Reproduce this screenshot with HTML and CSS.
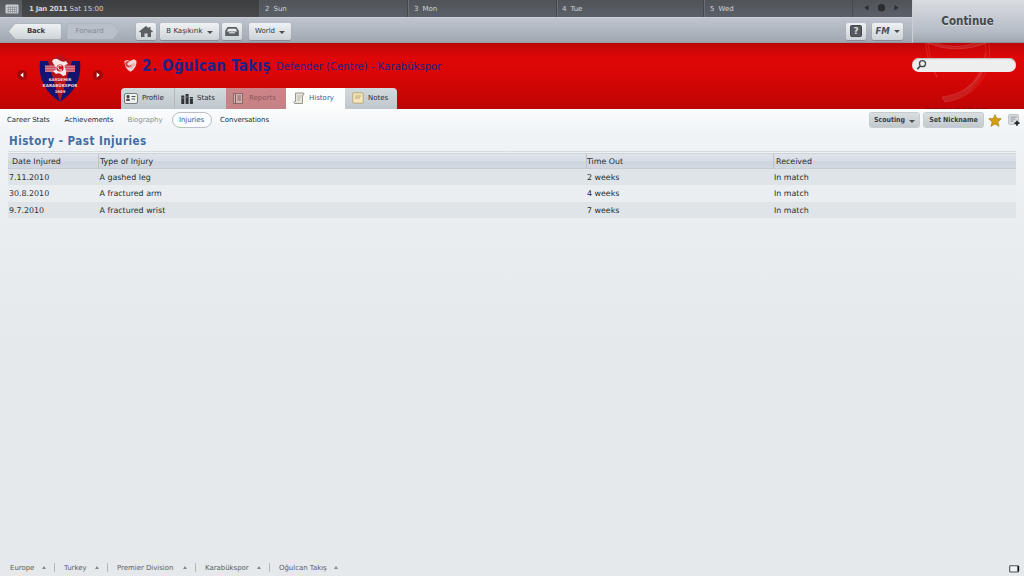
FILE: index.html
```html
<!DOCTYPE html>
<html lang="en">
<head>
<meta charset="utf-8">
<title>Oğulcan Takış - Past Injuries</title>
<link rel="stylesheet" href="styles.css">
</head>
<body>
<div class="top">
  <div class="bars">
    <div class="calendar">
      <div class="cal-icon"><svg width="14" height="10" viewBox="0 0 14 10"><rect x=".5" y=".5" width="13" height="9" rx="1" fill="#c9cccf"/><path d="M2 3.500h10M2 5.500h10M2 7.500h10M3.500 2v7M5.500 2v7M7.500 2v7M9.500 2v7M11.500 2v7" stroke="#85898d" stroke-width=".6"/></svg></div>
      <div class="day today"><b>1 Jan 2011</b><span>Sat 15:00</span></div>
      <div class="day sun"><span>2</span><span>Sun</span></div>
      <div class="day mon"><span>3</span><span>Mon</span></div>
      <div class="day tue"><span>4</span><span>Tue</span></div>
      <div class="day wed"><span>5</span><span>Wed</span></div>
      <div class="pager"><svg width="60" height="17" viewBox="1.500 0 60 17"><path d="M17 5v5.600l-4-2.800zM43 5v5.600l4-2.800z" fill="#2b2d30"/><circle cx="30" cy="7.700" r="3.700" fill="#2b2d30"/></svg></div>
    </div>
    <div class="toolbar">
      <svg class="arrows" width="113" height="18" viewBox="0 0 113 18">
        <defs><linearGradient id="btn" x2="0" y2="1"><stop stop-color="#eff2f4"/><stop offset="1" stop-color="#ccd3d8"/></linearGradient></defs>
        <path d="M.3 8.500L6 1.500Q7 .4 9 .4H51Q53.500 .4 53.500 2.500V14Q53.500 16.500 51 16.500H9Q7 16.500 6 15z" fill="url(#btn)" stroke="#959ca4" stroke-width=".6"/>
        <path d="M61 .7H103Q105 .7 106 2L111 8.500L106 15Q105 16.300 103 16.300H61Q59 16.300 59 14.500V2.500Q59 .7 61 .7z" fill="#b9c0c9" stroke="#a4abb5" stroke-width=".5"/>
        <text class="back" x="19" y="10.400">Back</text><text class="forward" x="67.500" y="10.400">Forward</text>
      </svg>
      <div class="button home"><svg width="14" height="11" viewBox="0 0 14 11"><path d="M7 0L0 5.500L1 6.500L2 6V11H5.500V7.500H8.500V11H12V6L13 6.500L14 5.500L11.500 3.500V1H9.800V2.200z" fill="#5c6065"/></svg></div>
      <div class="button manager">B Kaşıkırık<i class="caret"></i></div>
      <div class="button inbox"><svg width="14" height="9" viewBox="0 0 14 9"><path d="M3 .9H11L13 4V8.100H1V4z" fill="#eceef0" stroke="#5c6065" stroke-width="1.600"/><path d="M1 4.500H13V8.500H1z" fill="#5c6065"/><path d="M4 5.800H10" stroke="#dfe3e6" stroke-width="1.200"/></svg></div>
      <div class="button world">World<i class="caret"></i></div>
      <div class="button help"><svg width="12" height="12" viewBox="0 0 12 12"><rect x=".5" y=".5" width="11" height="11" rx="1" fill="#555a60" stroke="#44484d"/><text class="question" x="3.400" y="9.400">?</text></svg></div>
      <div class="button fm"><span class="fm-logo">FM</span><i class="caret"></i></div>
    </div>
  </div>
  <div class="continue">Continue</div>
</div>
<header class="header">
  <svg class="watermark" width="112" height="66" viewBox="0 0 112 66">
    <g fill="none" stroke="#f06060" stroke-opacity=".32"><path d="M14 0C14 11 18 23 25 34C20 22 17 10 16 0M15 0Q44 12 75 0M24 0Q44 7 62 0M73 0C78 23 65 49 30 54L33 59C62 55 81 32 77 0"/></g>
    <path d="M15 0Q44 12 75 0L62 0Q44 7 24 0zM30 54C55 52 69 34 73 8C77 32 61 55 33 59z" fill="#d07070" fill-opacity=".25"/>
    <path d="M14 65.500h62" stroke="#8c0808" stroke-dasharray="6 2 4 2"/>
  </svg>
  <div class="club">
    <svg class="nav" width="10" height="10" viewBox="0 0 10 10"><circle cx="5" cy="5" r="5" fill="#a00608"/><path d="M6.300 2.500v5L3.300 5z" fill="#fff"/></svg>
    <svg class="crest" width="42" height="52" viewBox="0 0 42 52">
      <path d="M2 8Q14 8 21 1Q28 8 40 8Q43 34 21 50Q-1 34 2 8z" fill="#b7141d"/>
      <path d="M1 8L9 8L21 49Q-2 34 1 8zM41 8L33 8L21 49Q44 34 41 8z" fill="#14136f"/>
      <rect x="6" y="12.500" width="30" height="6.500" fill="#ca4c60"/><path d="M6 13.200h30M6 15.700h30M6 18.200h30" stroke="#dc97a3" stroke-width=".8"/>
      <path d="M13 8Q16 4 20 7T27 8L29 11Q24 12 26 15T27 22L24 23Q21 19 17 21L14 18Q19 17 16 13T14 10z" fill="#f4e8e8"/>
      <circle cx="21" cy="15" r="3.600" fill="#ca1826"/><path d="M22.500 12.800Q18 12 19 15T23 17" fill="none" stroke="#fff"/>
      <text class="crest-small" x="21" y="28.300">KARDEMIR</text><text class="crest-name" x="21" y="34.300">KARABÜKSPOR</text><text class="crest-small" x="21" y="40.300">1969</text>
    </svg>
    <svg class="nav" width="10" height="10" viewBox="0 0 10 10"><circle cx="5" cy="5" r="5" fill="#a00608"/><path d="M3.700 2.500v5L6.700 5z" fill="#fff"/></svg>
  </div>
  <div class="person">
    <div class="nameline"><svg class="flag" width="13" height="13" viewBox="0 0 13 13"><path d="M.5 2L3 1L6 2L10 .3L12.500 2Q13 9 6.500 12.800Q0 9 .5 2z" fill="#f2d5d5"/><path d="M1 4Q3 .6 6 3Q3 3 3.500 5.500Q5 8 8 5Q7 8.500 4 8.500Q1 7.500 1 4z" fill="#d84048"/><path d="M6 9L10 4M7 10L11 5" stroke="#d27777" stroke-width=".6"/></svg><h1>2. Oğulcan Takış</h1><span class="role">Defender (Centre) - Karabükspor</span></div>
    <nav class="tabs">
      <div class="tab profile"><svg width="14" height="11" viewBox="0 0 14 11"><rect x=".5" y=".5" width="13" height="10" rx="1.500" fill="#eef0f0" stroke="#777c80"/><path d="M3 2.500h2v2.500H3zM2.500 6.500h3v1H2.500zM7.500 3.500h4M7.500 6h3.500" fill="#343739" stroke="#4d5154"/></svg><span>Profile</span></div>
      <div class="tab stats"><svg width="12" height="11" viewBox="0 0 12 11"><path d="M.3 2.500h3V11h-3zM4.600 1h3v10h-3zM8.900 4h3v7h-3z" fill="#2f3336"/><path d="M.3 5h3M4.600 4h3M8.900 5.500h3" stroke="#737b80"/></svg><span>Stats</span></div>
      <div class="tab reports"><svg width="10" height="11" viewBox="0 0 10 11"><rect x=".5" y=".5" width="9" height="10" fill="#ceb4b3" stroke="#916565"/><path d="M2.500 1v9M4.500 3h3.500M4.500 5h3.500M4.500 7h3.500" stroke="#865b5b"/></svg><span>Reports</span></div>
      <div class="tab history"><svg width="12" height="13" viewBox="0 0 12 13"><path d="M2.500 1H10.500Q11.500 2 10.500 3H9.500V11.500H1.500Q.3 10.500 1.500 9.500H2.500z" fill="#e9e8df" stroke="#8d8c82" stroke-width=".9"/><path d="M4.300 4h4M4.300 6h3.500M4 8h3" stroke="#a3a298" stroke-width=".7"/></svg><span>History</span></div>
      <div class="tab notes"><svg width="12" height="12" viewBox="0 0 12 12"><path d="M.8 1.500Q.8 .8 1.500 .8H10.500Q11.200 .8 11.200 1.500V10.500Q11.200 11.200 10.500 11.200H1.500Q.8 11 .8 10z" fill="#f5e6b8" stroke="#ad9c6e" stroke-width=".8"/><path d="M3 4h6M3 6h5" fill="none" stroke="#9b8d66" stroke-width=".7"/></svg><span>Notes</span></div>
    </nav>
  </div>
  <div class="search"><svg width="11" height="12" viewBox="0 0 11 12"><circle cx="6.500" cy="4.700" r="3" fill="none" stroke="#44474a" stroke-width="1.300"/><path d="M4.300 7L1.300 10.200" stroke="#44474a" stroke-width="1.700"/></svg></div>
</header>
<div class="subnav">
  <span class="career">Career Stats</span><span class="achieve">Achievements</span><span class="bio">Biography</span><span class="injuries">Injuries</span><span>Conversations</span>
  <div class="actions"><div class="action scouting">Scouting<i class="caret"></i></div><div class="action nickname">Set Nickname</div>
    <svg class="star" width="14" height="13" viewBox="0 0 14 13"><path d="M7 .7L8.700 4.500L13.200 4.800L9.800 7.900L11 12.300L7 9.900L3 12.300L4.200 7.900L.8 4.800L5.300 4.500z" fill="#d5a00c" stroke="#a57b0c" stroke-width=".7"/></svg>
    <svg width="12" height="12" viewBox="0 0 12 12"><rect x=".5" y=".5" width="10" height="10" rx="1.500" fill="#d9dddf" stroke="#b4babd" stroke-width=".8"/><path d="M2.500 3h6.500M2.500 5h5M2.500 7h3" stroke="#858c90" stroke-width=".8"/><path d="M9 6.700v5M6.500 9.200h5" stroke="#222528" stroke-width="1.700"/></svg>
  </div>
</div>
<main>
  <h2>History - Past Injuries</h2>
  <div class="table">
    <div class="row head"><span>Date Injured</span><span>Type of Injury</span><span>Time Out</span><span>Received</span></div>
    <div class="row"><span>7.11.2010</span><span>A gashed leg</span><span>2 weeks</span><span>In match</span></div>
    <div class="row"><span>30.8.2010</span><span>A fractured arm</span><span>4 weeks</span><span>In match</span></div>
    <div class="row"><span>9.7.2010</span><span>A fractured wrist</span><span>7 weeks</span><span>In match</span></div>
  </div>
</main>
<footer>
  <div class="crumb c1">Europe<i></i></div><div class="crumb c2">Turkey<i></i></div><div class="crumb c3">Premier Division<i></i></div><div class="crumb c4">Karabükspor<i></i></div><div class="crumb c5">Oğulcan Takış<i></i></div>
  <svg class="screen" width="11" height="8" viewBox="0 0 11 8"><rect x=".7" y=".7" width="8.600" height="6.300" rx=".5" fill="#f1f3f4" stroke="#505456" stroke-width="1.100"/><path d="M9.300 1v5.500" stroke="#111" stroke-width="1.700"/></svg>
</footer>
</body>
</html>
```
FILE: styles.css
```css
* { box-sizing: border-box; }
body { margin: 0; width: 1024px; height: 576px; overflow: hidden; display: flex; flex-direction: column; font: 7px "DejaVu Sans", sans-serif; color: #292c2e; background: #e5e9ec; white-space: nowrap; }
svg { display: block; flex: none; }
h1, h2 { margin: 0; }
.top { display: flex; height: 43px; flex: none; }
.bars { width: 912px; }
.calendar { display: flex; height: 17px; background: linear-gradient(#505459, #5b6068); color: #d0d2d4; line-height: 19px; }
.cal-icon { width: 22px; padding: 4px 0 0 5px; background: linear-gradient(#55585c, #646970); }
.day { display: flex; gap: 4px; padding-left: 6px; border-left: 1px solid #6a6f75; box-shadow: -1px 0 #44484c; }
.today { width: 237px; gap: 3px; background: linear-gradient(#3c3d3f, #48494b); border: 0; padding-left: 7px; box-shadow: none; }
.today b { width: 37.500px; letter-spacing: -.32px; }
.sun { width: 149px; border: 0; box-shadow: none; }
.mon { width: 149px; padding-left: 5px; }
.tue { width: 147px; padding-left: 4px; }
.wed { width: 148px; padding-left: 5px; }
.pager { width: 60px; border-left: 1px solid #474b4f; }
.toolbar { display: flex; align-items: flex-start; height: 26px; padding: 5px 9px 0 8px; background: linear-gradient(#bfc5ce, #a1a8b1); border-top: 1px solid #cbd0d8; border-bottom: 1px solid #969ba2; }
.arrows { margin-right: 15px; }
.back { font-size: 7px; font-weight: bold; fill: #3b4045; letter-spacing: -.25px; }
.forward { font-size: 7px; fill: #858c95; }
.button { display: flex; align-items: center; justify-content: center; height: 17px; line-height: 7px; padding-bottom: 1px; flex: none; border-radius: 2px; background: linear-gradient(#eff2f4, #ccd3d8); box-shadow: 0 1px 1px #858c94; color: #303439; }
.caret { width: 0; height: 0; border-left: 3px solid transparent; border-right: 3px solid transparent; border-top: 3px solid #4a4f54; margin-left: 4px; margin-top: 2px; }
.home { width: 20px; margin-right: 4px; }
.manager { width: 59px; margin-right: 3px; }
.inbox { width: 20px; margin-right: 7px; }
.world { width: 42px; }
.help { width: 20px; margin-left: auto; margin-right: 6px; }
.question { font-size: 9px; font-weight: bold; fill: #d9dcde; }
.fm { width: 31px; }
.fm-logo { font: italic bold 8.500px "DejaVu Sans"; letter-spacing: -.1px; color: #4a4f54; }
.fm .caret { margin-left: 4px; margin-top: 0; }
.continue { width: 112px; height: 43px; text-align: center; padding-right: 2px; font: bold 11.500px/42px "DejaVu Sans Condensed", "DejaVu Sans"; color: #44484d; background: linear-gradient(#dadde2, #b5bcc5 75%, #9fa7ae); border-bottom: 1px solid #8c9299; border-left: 1px solid #cbd0d5; text-shadow: 0 1px #dce0e3; }
.header { display: flex; height: 66px; flex: none; position: relative; background: linear-gradient(#bc0505, #df0707 22%, #d80606 50%, #bd0404); }
.watermark { position: absolute; right: 0; top: 0; }
.club { width: 121px; display: flex; align-items: flex-start; padding-left: 17px; }
.nav { margin-top: 27px; }
.crest { margin: 10px 12px 0; }
.crest-small, .crest-name { font-family: "DejaVu Sans"; font-weight: bold; fill: #f4dada; text-anchor: middle; font-size: 3.800px; }
.crest-name { font-size: 4.100px; }
.person { width: 791px; }
.nameline { height: 45px; display: flex; align-items: flex-start; color: #20208b; }
.flag { margin: 16px 5px 0 3px; }
h1 { font: bold 15px/18px "DejaVu Sans Condensed", "DejaVu Sans"; letter-spacing: .3px; margin-top: 14px; width: 134px; }
.role { font-size: 10px; line-height: 13px; letter-spacing: .05px; margin-top: 17px; }
.tabs { display: flex; height: 21px; }
.tab { display: flex; align-items: center; height: 21px; padding-left: 3px; padding-bottom: 1px; background: linear-gradient(#d2dadd, #bfc7cd); }
.tab svg { margin-right: 4px; }
.profile { width: 54px; border-radius: 4px 0 0; border-right: 1px solid #b0b9bf; }
.stats { width: 51px; padding-left: 6px; }
.reports { width: 60px; background: linear-gradient(#cf8488, #c48286); color: #8a5659; padding-left: 7px; }
.reports svg { margin-right: 6px; }
.history { width: 59px; padding-left: 7px; background: #fcfdfd; color: #365e93; }
.notes { width: 52px; padding-left: 7px; border-radius: 0 4px 0 0; }
.search { margin-top: 15px; width: 104px; height: 14px; border-radius: 7px; background: #eee; padding: 1px 4px; position: relative; box-shadow: inset 0 1px 1px #bbb; }
.subnav { display: flex; align-items: center; flex: none; height: 22px; padding: 0 4px 0 7px; font-size: 7px; letter-spacing: -.07px; background: linear-gradient(#fafcfd, #f1f4f7); }
.career { width: 57.500px; }
.achieve { width: 63px; }
.bio { width: 44px; color: #8b9094; }
.injuries { width: 40px; height: 16px; line-height: 14px; border: 1px solid #b9bfc2; border-radius: 8px; text-align: center; color: #365f96; background: #fbfcfd; margin-right: 8.500px; }
.actions { margin-left: auto; display: flex; align-items: center; }
.action { height: 14px; border-radius: 2px; background: linear-gradient(#d9dee0, #c2c9cc); box-shadow: 0 0 0 1px #c6cccf; display: flex; align-items: center; justify-content: center; font: bold 7px "DejaVu Sans Condensed", "DejaVu Sans"; letter-spacing: -.04px; color: #3a3e41; }
.scouting { width: 49px; margin-right: 5px; }
.nickname { width: 59px; margin-right: 5px; }
.star { margin-right: 6px; }
main { flex: 1; padding: 0 8px; background: linear-gradient(#f1f4f7, #e9edf0 100px, #e5e9ec 220px); }
h2 { font: bold 11.500px/20px "DejaVu Sans Condensed", "DejaVu Sans"; letter-spacing: .48px; height: 21px; padding-left: 1px; color: #426da4; border-bottom: 1px solid #d7dcdf; margin-bottom: 1px; }
.row { display: grid; grid-template-columns: 90px 488px 187px 1fr; height: 16.300px; line-height: 17px; font-size: 7.900px; background: #dee4e7; }
.row span { padding-left: 1px; }
.row span:nth-child(2) { padding-left: 1.500px; }
.row:nth-child(3) { background: #eaeef1; }
.head { height: 16px; line-height: 16px; background: linear-gradient(#dfe3ea, #d8dee6 50%, #ced5df 52%, #d2d8df); border-top: 1px solid #cdd3d8; border-bottom: 1px solid #c5ccd3; }
.head span { line-height: 15px; }
.head span:first-child { padding-left: 4px; }
.head span + span { border-left: 1px solid #bcc3ca; }
.head span:nth-child(n+2) { padding-left: 1px; }
.head span:nth-child(3) { padding-left: 0; }
.head span:last-child { padding-left: 2px; }
footer { display: flex; align-items: center; flex: none; height: 17px; color: #5a5e61; padding-left: 10px; }
.crumb { display: flex; align-items: center; height: 9px; letter-spacing: -.04px; border-right: 1px solid #b2b7ba; margin-right: 9px; }
.crumb i { width: 0; height: 0; border-left: 2.500px solid transparent; border-right: 2.500px solid transparent; border-bottom: 3px solid #85898c; margin-left: auto; margin-right: 8px; }
.c1 { width: 45px; }
.c2 { width: 44px; }
.c3 { width: 79px; }
.c4 { width: 65px; }
.c5 { width: 67px; border: 0; }
.screen { margin: 2px 4px 0 auto; }
```
